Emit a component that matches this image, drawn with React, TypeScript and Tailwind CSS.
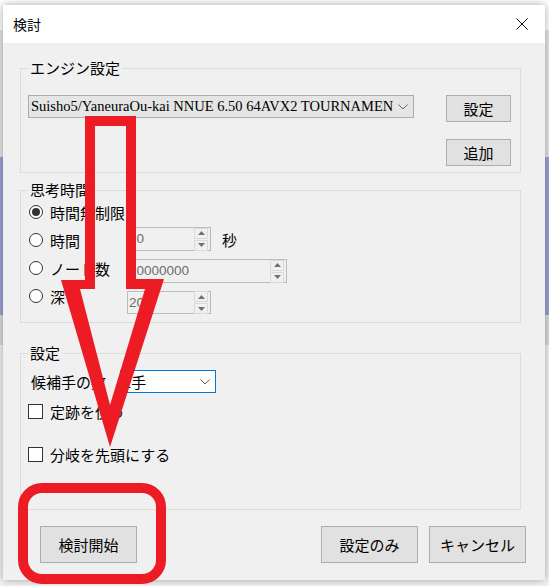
import React from "react";

const jp = "font-['Noto_Sans_CJK_JP','Noto_Sans',sans-serif]";

function Button({ label, className }: { label: string; className?: string }) {
  return (
    <button
      className={`flex items-center justify-center border border-[#adadad] bg-[#e1e1e1] text-[15px] leading-none text-black ${className ?? ""}`}
    >
      {label}
    </button>
  );
}

function Chevron() {
  return (
    <svg width="10" height="6" viewBox="0 0 10 6" className="shrink-0">
      <path d="M0.5 0.5 L5 5 L9.5 0.5" fill="none" stroke="#606060" strokeWidth="1" />
    </svg>
  );
}

function SpinArrows() {
  return (
    <div className="ml-auto mr-[2px] flex flex-col gap-[1px]">
      <div className="flex h-[11px] w-[14px] items-center justify-center border border-[#dadada]">
        <svg width="7" height="4" viewBox="0 0 7 4">
          <path d="M3.5 0 L7 4 L0 4 Z" fill="#707070" />
        </svg>
      </div>
      <div className="flex h-[11px] w-[14px] items-center justify-center border border-[#dadada]">
        <svg width="7" height="4" viewBox="0 0 7 4">
          <path d="M0 0 L7 0 L3.5 4 Z" fill="#707070" />
        </svg>
      </div>
    </div>
  );
}

function Spin({ value, className }: { value: string; className: string }) {
  return (
    <div className={`flex items-center border border-[#bcbcbc] bg-[#f0f0f0] pl-[1px] ${className}`}>
      <span className="font-['Liberation_Sans',sans-serif] text-[13.5px] leading-none text-[#6d6d6d]">{value}</span>
      <SpinArrows />
    </div>
  );
}

function Radio({ label, checked }: { label: string; checked?: boolean }) {
  return (
    <div className="flex h-[24px] items-center gap-[7px]">
      <span className="flex h-[14px] w-[14px] items-center justify-center rounded-full border border-[#333] bg-white">
        {checked && <span className="h-[8px] w-[8px] rounded-full bg-[#333]" />}
      </span>
      <span className="whitespace-nowrap text-[15px] leading-none">{label}</span>
    </div>
  );
}

function Check({ label, className }: { label: string; className?: string }) {
  return (
    <div className={`flex h-[20px] items-center gap-[7px] pl-[7px] ${className ?? ""}`}>
      <span className="h-[15px] w-[15px] border border-[#333] bg-white" />
      <span className="text-[15px] leading-none">{label}</span>
    </div>
  );
}

export default function App() {
  return (
    <div className={`relative h-[586px] w-[549px] overflow-hidden bg-white text-black ${jp}`}>
      {/* app behind the dialog */}
      <div className="flex h-full flex-col">
        <div className="h-[30px] bg-white" />
        <div className="h-[127px] bg-[#e6e6e6]" />
        <div className="h-[158px] bg-[#9ca2d6]" />
        <div className="h-[30px] bg-[#dcdcdc]" />
        <div className="flex-1 bg-[#f3f3f3]" />
      </div>

      {/* dialog window */}
      <div className="absolute left-[3px] top-[5px] flex h-[575px] w-[542px] flex-col bg-[#f0f0f0] shadow-[0_0_8px_rgba(0,0,0,0.35)]">
        <div className="flex h-[38px] shrink-0 items-center justify-between bg-white pl-[10px] pr-[17px]">
          <span className="text-[14px] leading-none">検討</span>
          <svg width="12" height="12" viewBox="0 0 12 12">
            <path d="M0.5 0.5 L11.5 11.5 M11.5 0.5 L0.5 11.5" stroke="#111" strokeWidth="1" />
          </svg>
        </div>

        <div className="flex flex-col pl-[17px] pt-[15px]">
          <fieldset className="w-[501px] border border-[#dcdcdc] pb-[6px]">
            <legend className="ml-[7px] px-[2px] text-[15px] leading-[20px]">エンジン設定</legend>
            <div className="flex items-start justify-between pl-[7px] pr-[9px] pt-[17px]">
              <div className="flex h-[23px] w-[386px] items-center border border-[#acacac] bg-[#e5e5e5] pl-[2px] pr-[5px]">
                <span className="w-[362px] overflow-hidden whitespace-nowrap font-['Liberation_Serif',serif] text-[14.5px] leading-none">
                  Suisho5/YaneuraOu-kai NNUE 6.50 64AVX2 TOURNAMENT
                </span>
                <span className="ml-auto">
                  <Chevron />
                </span>
              </div>
              <div className="flex flex-col gap-[17px]">
                <Button label="設定" className="h-[27px] w-[65px]" />
                <Button label="追加" className="h-[27px] w-[65px]" />
              </div>
            </div>
          </fieldset>

          <fieldset className="mt-[7px] w-[501px] border border-[#dcdcdc] pb-[8px]">
            <legend className="ml-[7px] px-[2px] text-[15px] leading-[20px]">思考時間</legend>
            <div className="flex pl-[8px]">
              <div className="flex w-[98px] flex-col gap-[4px]">
                <Radio label="時間無制限" checked />
                <Radio label="時間" />
                <Radio label="ノード数" />
                <Radio label="深さ" />
              </div>
              <div className="flex flex-col gap-[8px] pt-[27px]">
                <div className="flex items-center">
                  <Spin value="10" className="h-[24px] w-[84px]" />
                  <span className="ml-[11px] text-[15px] leading-none">秒</span>
                </div>
                <Spin value="10000000" className="h-[24px] w-[160px]" />
                <Spin value="20" className="h-[23px] w-[84px]" />
              </div>
            </div>
          </fieldset>

          <fieldset className="mt-[20px] w-[501px] border border-[#dcdcdc] pb-[45px]">
            <legend className="ml-[7px] px-[2px] text-[15px] leading-[20px]">設定</legend>
            <div className="mt-[7px] flex h-[23px] items-center pl-[10px]">
              <span className="w-[89px] text-[15px] leading-none">候補手の数</span>
              <div className="flex h-[23px] w-[96px] items-center border border-[#0078d7] bg-white pl-[2px] pr-[5px]">
                <span className="text-[15px] leading-none">1手</span>
                <span className="ml-auto">
                  <Chevron />
                </span>
              </div>
            </div>
            <Check label="定跡を使う" className="mt-[8px]" />
            <Check label="分岐を先頭にする" className="mt-[23px]" />
          </fieldset>

          <div className="mt-[16px] flex w-[506px] items-center pl-[20px]">
            <Button label="検討開始" className="h-[37px] w-[97px]" />
            <div className="ml-auto flex gap-[11px]">
              <Button label="設定のみ" className="h-[37px] w-[97px]" />
              <Button label="キャンセル" className="h-[37px] w-[97px]" />
            </div>
          </div>
        </div>
      </div>

      {/* red annotations */}
      <div className="absolute left-[18px] top-[483px] h-[101px] w-[148px] rounded-[24px] border-[10px] border-[#ed1c24]" />
      <svg className="absolute left-0 top-0" width="549" height="586" viewBox="0 0 549 586">
        <path
          fillRule="evenodd"
          fill="#ed1c24"
          d="M85 116 L136 116 L136 279 L164 279 L110 447 L61 280 L85 280 Z M95 126 L95 289 L80 289 L110 405 L145 289 L126 289 L126 126 Z"
        />
      </svg>
    </div>
  );
}
